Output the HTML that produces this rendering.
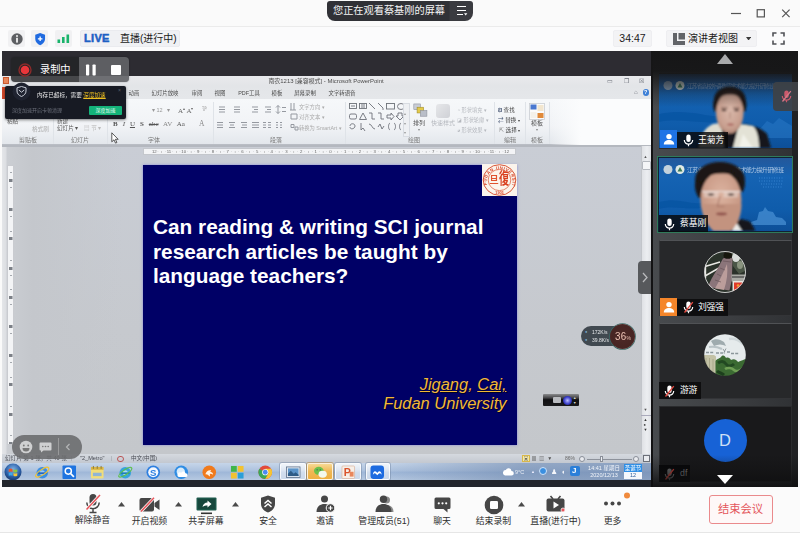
<!DOCTYPE html>
<html lang="zh-CN">
<head>
<meta charset="utf-8">
<title>会议</title>
<style>
*{box-sizing:border-box;margin:0;padding:0}
html,body{width:800px;height:533px;overflow:hidden;background:#fafafa}
body{position:relative;font-family:"Liberation Sans","Noto Sans CJK SC",sans-serif;color:#222}
.abs{position:absolute}
#titlebar{left:0;top:0;width:800px;height:27px;background:#fafafa;border-bottom:1px solid #ebebeb}
#toolbar{left:0;top:27px;width:800px;height:24px;background:#fbfbfc}
#stage{left:2px;top:51px;width:796px;height:436px;background:#2d2c32}
#side{left:651px;top:51px;width:147px;height:436px;background:linear-gradient(90deg,#131314 0,#131314 1.500px,#484b4e 2px,#3e4043 70px,#303235 141px,#202123 141.500px);overflow:hidden}
#sidein{position:absolute;left:1px;top:0;width:146px;height:436px}
#bottom{left:0;top:487px;width:800px;height:46px;background:#fbfbfb;border-bottom:1px solid #e6e6e6}
#ppt{left:2px;top:76px;width:649px;height:411px;background:#c9ccd1;overflow:hidden}
#slide{left:141px;top:88.500px;width:373.500px;height:280.500px;background:#000066}
.pill{left:327px;top:1px;width:146px;height:20px;background:linear-gradient(90deg,#303136 0,#303136 122px,#3a3b40 123px);border-radius:3px 3px 8px 8px;color:#f4f4f4;font-size:10.2px;line-height:19px;padding-left:6px;white-space:nowrap}

.wc{top:0;height:26px;width:26px;color:#444}
.tb-box{top:30px;height:17px;background:#f3f3f5;border:1px solid #eeeef1;border-radius:2px}
.tb-ic{top:30px;width:17px;height:17px;background:#f1f1f3;border-radius:2px}
#live{left:80px;top:30px;width:100px;height:17px;background:#f0f1f4;border:1px solid #eaebef;border-radius:2px;white-space:nowrap;font-size:10px;line-height:15px;color:#1a1a1a}
#live b{font-family:"Liberation Sans",sans-serif;font-weight:bold;color:#1c60c4;font-size:11px;letter-spacing:.3px;position:absolute;left:3px;top:0;-webkit-text-stroke:.5px #1c60c4}
#live span{position:absolute;left:39px;top:0}

#ppt{font-family:"Liberation Sans","Noto Sans CJK SC",sans-serif}
#ppt .t{position:absolute;white-space:nowrap;color:#555;font-size:6px;line-height:8px;transform:translateX(-50%);filter:blur(.35px)}
#ppt .tl{position:absolute;white-space:nowrap;color:#777;font-size:5.6px;line-height:8px;filter:blur(.35px)}
#ppt .sep{position:absolute;top:26px;width:1px;height:42px;background:#dfe3e8}
#ppt .ic{position:absolute;filter:blur(.5px)}
#pt-title{left:0;top:0;width:650px;height:10px;background:linear-gradient(#e9eaed,#e3e5e8)}
#pt-tabs{left:0;top:10px;width:650px;height:13px;background:linear-gradient(#e3e5e8,#e5e7ea)}
#pt-rib{left:0;top:23px;width:650px;height:45.500px;background:linear-gradient(#f6f8fa 0%,#f1f3f6 60%,#e3e7ec 100%);border-bottom:1px solid #b9bdc4}
#pt-work{left:0;top:70px;width:650px;height:308px;background:linear-gradient(90deg,#e4e6e9 0,#dcdee2 4px,#cbced3 5px,#c4c7cc 30px,rgba(196,199,204,0) 120px),linear-gradient(#c9cdd5,#c6c9ce 60%,#c4c7cb)}
#slide{box-shadow:0 0 2.500px rgba(110,110,215,.75)}
#slide .h{position:absolute;left:10px;top:50.800px;color:#fff;font-family:"Liberation Sans",sans-serif;font-weight:bold;font-size:20.800px;line-height:24.5px;white-space:nowrap;letter-spacing:0}
#slide .a{position:absolute;right:10px;top:210.300px;color:#f2b838;font-family:"Liberation Sans",sans-serif;font-style:italic;font-size:16.450px;line-height:19.300px;text-align:right;white-space:nowrap;text-shadow:1px 1px 0 rgba(0,0,0,.6)}
#pt-status{left:0;top:378px;width:650px;height:9px;background:linear-gradient(#d5d9df,#c3c8d0)}
#taskbar{left:0;top:387px;width:650px;height:17px;background:linear-gradient(90deg,rgba(120,145,180,0) 0,rgba(120,145,180,0) 380px,rgba(105,130,168,.55) 520px,rgba(105,130,168,.6) 650px),linear-gradient(#c6d5e9,#adc2de 45%,#9fb7d8 55%,#b6c9e1)}
#blackstrip{left:0;top:404px;width:650px;height:8px;background:#22252b}

#rec{left:11px;top:57px;width:118px;height:25px;border-radius:4px;background:rgba(34,35,38,.82);overflow:hidden;box-shadow:0 0 2px rgba(0,0,0,.3)}
#rec .r{position:absolute;left:68px;top:0;width:50px;height:25px;background:rgba(150,152,156,.5)}
#rec .txt{position:absolute;left:29px;top:0;color:#fff;font-size:10.2px;line-height:25px;white-space:nowrap}
#pop{left:5px;top:86px;width:121px;height:33px;background:#171a23;border-radius:2px;box-shadow:0 1px 3px rgba(0,0,0,.5)}
#pop .a1{position:absolute;left:32px;top:5px;font-size:5.6px;line-height:8px;color:#e8e8e8;white-space:nowrap;filter:blur(.3px)}
#pop .a2{position:absolute;left:7px;top:20px;font-size:5px;line-height:8px;color:#6d717c;white-space:nowrap;filter:blur(.3px)}
#pop .btn{position:absolute;left:84px;top:20px;width:33px;height:9px;background:#14b37a;color:#eafff5;font-size:5px;line-height:9px;text-align:center;border-radius:1px}
#emo{left:12px;top:435px;width:70px;height:24px;border-radius:12px;background:rgba(108,109,111,.9)}
#stat .s{position:absolute;top:0;font-size:5.6px;line-height:9px;color:#4a4d55;white-space:nowrap;filter:blur(.3px)}
.tk{position:absolute;top:1.500px;width:14.500px;height:14.500px;filter:blur(.45px)}
.tkh{position:absolute;top:0;width:26px;height:17px;background:linear-gradient(rgba(255,255,255,.75),rgba(235,242,250,.45));border:1px solid rgba(255,255,255,.8);border-radius:2px;box-shadow:0 0 0 1px rgba(110,130,160,.45)}

#side .fr{position:absolute;left:7px;width:133px;height:76px;background:#27282a;border:1px solid #333437;border-top-color:#505255}
#side .lab{position:absolute;height:17px;background:rgba(8,8,10,.82);color:#fff;font-size:8.800px;line-height:17px;white-space:nowrap;font-weight:400}
#side .lab span{position:absolute;top:0}
#side .ub{position:absolute;width:17px;height:17.500px}

#bottom .l{position:absolute;top:28px;font-size:8.900px;line-height:12px;color:#2e2e2e;white-space:nowrap;transform:translateX(-50%)}
#bottom .c{position:absolute;top:15px;width:7px;height:4.500px}
#bottom svg.i{position:absolute}
#endbtn{position:absolute;left:708.500px;top:7.500px;width:64px;height:29px;border:1px solid #ea8a8c;border-radius:3px;background:#fef8f8;color:#e4565b;font-size:11.300px;line-height:27px;text-align:center}
#ppt .tb{font-size:5.400px;color:#4a4a4a}
#hruler i{position:absolute;top:0;font-style:normal;font-size:4.300px;line-height:5px;color:#666;transform:translateX(-50%);white-space:nowrap}
</style>
</head>
<body>
<div id="titlebar" class="abs"></div>
<div class="abs pill">您正在观看蔡基刚的屏幕</div>
<div id="toolbar" class="abs"></div>

<!-- window controls -->
<svg class="abs" style="left:726px;top:0" width="74" height="26" viewBox="0 0 74 26">
  <line x1="5" y1="13.5" x2="15" y2="13.5" stroke="#555" stroke-width="1.2"/>
  <rect x="31.200" y="9.700" width="7.200" height="7.200" fill="none" stroke="#555" stroke-width="1.200"/>
  <path d="M56.200 9.700 L63.600 17.100 M63.600 9.700 L56.200 17.100" stroke="#555" stroke-width="1.200" fill="none"/>
</svg>
<!-- pill menu icon -->
<svg class="abs" style="left:456px;top:5px" width="12" height="11" viewBox="0 0 12 11">
  <path d="M1 1.5H10 M1 5.5H10 M1 9.5H7" stroke="#fff" stroke-width="1.2"/>
  <path d="M8 8.3h3.4l-1.7 2.2z" fill="#fff"/>
</svg>
<!-- toolbar left icons -->
<div class="abs tb-ic" style="left:8px"></div>
<div class="abs tb-ic" style="left:31px"></div>
<div class="abs tb-ic" style="left:55px"></div>
<svg class="abs" style="left:10px;top:31.500px" width="14" height="14" viewBox="0 0 14 14">
  <circle cx="7" cy="7" r="5.700" fill="#5d5f63"/>
  <circle cx="7" cy="3.9" r="1" fill="#f1f1f1"/>
  <rect x="6.1" y="5.8" width="1.8" height="4.8" fill="#f1f1f1"/>
</svg>
<svg class="abs" style="left:33.600px;top:32px" width="12.300" height="14" viewBox="0 0 14 16">
  <path d="M7 1 L12.6 3 V8 C12.6 11.5 10 13.8 7 15 C4 13.8 1.4 11.5 1.4 8 V3 Z" fill="#1f6ae0"/>
  <path d="M7 5.2 V10.4 M4.4 7.8 H9.6" stroke="#fff" stroke-width="1.5"/>
</svg>
<svg class="abs" style="left:57px;top:32px" width="14" height="13" viewBox="0 0 14 13">
  <rect x="0.5" y="7.500" width="2.600" height="3.500" fill="#19b36b"/>
  <rect x="5" y="5" width="2.600" height="6" fill="#19b36b"/>
  <rect x="9.500" y="2.500" width="2.600" height="8.500" fill="#19b36b"/>
</svg>
<div id="live" class="abs"><b>LIVE</b><span>直播(进行中)</span></div>
<!-- toolbar right -->
<div class="abs tb-box" style="left:613px;width:39px;font-size:10.5px;line-height:15px;text-align:center;color:#1a1a1a">34:47</div>
<div class="abs tb-box" style="left:666px;width:91px;font-size:10px;line-height:15px;color:#1a1a1a;white-space:nowrap">
  <svg class="abs" style="left:6px;top:2px" width="12" height="12" viewBox="0 0 12 12"><path d="M0 0H4V8H12V12H0Z" fill="#626468"/><rect x="5.5" y="0" width="6.5" height="6.5" fill="#626468"/></svg>
  <span class="abs" style="left:21px;top:0">演讲者视图</span>
  <svg class="abs" style="left:79px;top:5.500px" width="5.200" height="3.600" viewBox="0 0 6 4"><path d="M0 0H6L3 4Z" fill="#3a3a3a"/></svg>
</div>
<svg class="abs" style="left:772px;top:32px" width="13" height="13" viewBox="0 0 13 13">
  <path d="M1 4.5V1H4.5 M8.5 1H12V4.5 M12 8.5V12H8.5 M4.5 12H1V8.5" stroke="#505256" stroke-width="1.6" fill="none"/>
</svg>
<div id="stage" class="abs"></div>
<div id="ppt" class="abs">
  <div id="pt-title" class="abs"></div>
  <div id="pt-tabs" class="abs"></div>
  <div id="pt-rib" class="abs"></div>
  <div id="pt-work" class="abs"></div>
  <div class="t" style="left:324px;top:1px;color:#4c4c4c;font-size:5.950px">南农1213 [兼容模式] - Microsoft PowerPoint</div>
  <!-- tabs -->
  <div class="abs" style="left:0;top:11px;width:9px;height:12px;background:#d2492a"></div>
  <div class="t tb" style="left:132px;top:13px">动画</div>
  <div class="t tb" style="left:163px;top:13px">幻灯片放映</div>
  <div class="t tb" style="left:195px;top:13px">审阅</div>
  <div class="t tb" style="left:218px;top:13px">视图</div>
  <div class="t tb" style="left:247px;top:13px">PDF工具</div>
  <div class="t tb" style="left:275px;top:13px">模板</div>
  <div class="t tb" style="left:303px;top:13px">屏幕录制</div>
  <div class="t tb" style="left:340px;top:13px">文字转语音</div>
  <!-- group labels -->
  <div class="t" style="left:26px;top:60px;color:#777">剪贴板</div>
  <div class="t" style="left:78px;top:60px;color:#777">幻灯片</div>
  <div class="t" style="left:152px;top:60px;color:#777">字体</div>
  <div class="t" style="left:274px;top:60px;color:#777">段落</div>
  <div class="t" style="left:412px;top:60px;color:#777">绘图</div>
  <div class="t" style="left:508px;top:60px;color:#777">编辑</div>
  <div class="t" style="left:535px;top:60px;color:#777">模板</div>
  <div class="sep" style="left:51px"></div><div class="sep" style="left:105px"></div><div class="sep" style="left:211px"></div>
  <div class="sep" style="left:343px"></div><div class="sep" style="left:492px"></div><div class="sep" style="left:523px"></div><div class="sep" style="left:547px"></div>
  <!-- clipboard / slides -->
  <div class="tl" style="left:5px;top:41px;color:#666">粘贴</div>
  <div class="tl" style="left:30px;top:49px;color:#aaa">格式刷</div>
  <div class="tl" style="left:55px;top:41px;color:#555">新建</div>
  <div class="tl" style="left:55px;top:48px;color:#555">幻灯片 ▾</div>
  <div class="tl" style="left:82px;top:48px;color:#bbb">▤ 节 ▾</div>
  <!-- font group -->
  <div class="tl" style="left:150px;top:30px;color:#999;font-size:5.5px">▾ 12 &nbsp;&nbsp;▾</div>
  <div class="tl" style="left:176px;top:29px;color:#666;font-family:'Liberation Serif',serif;font-size:7px">A<sup style="font-size:4px">▴</sup> A<sup style="font-size:4px">▾</sup></div>
  <div class="tl" style="left:200px;top:29px;color:#999;font-size:7px">⅌</div>
  <div class="tl" style="left:111px;top:43.5px;color:#555;font-family:'Liberation Serif',serif;font-size:7px;word-spacing:3.2px"><b>B</b> <i>I</i> <u>U</u> <b>S</b> <s>abc</s> <span style="color:#888">AV</span> Aa</div>
  <div class="tl" style="left:197px;top:43.5px;color:#888;font-family:'Liberation Serif',serif;font-size:7.5px">A</div>
  <!-- paragraph group icons -->
  <svg class="ic" style="left:214px;top:26px" width="130" height="32" viewBox="0 0 130 32">
    <g stroke="#9599a0" stroke-width="1" fill="none">
      <path d="M3 5h6M3 7.500h6M3 10h6 M18 5h6M18 7.500h6M18 10h6"/>
      <path d="M36 5h6M38 7.500h4M36 10h6 M49 5h6M51 7.500h4M49 10h6"/>
      <path d="M62 3.500v8M60 5.500l2-2 2 2M60 9.500l2 2 2-2 M66 5.500h4M66 9.500h4"/>
      <path d="M1 20.500h6M1 23h6M1 25.500h6 M13 20.500h6M14 23h4M13 25.500h6 M25 20.500h6M26 23h5M25 25.500h6 M36 20.500h7M36 23h7M36 25.500h7 M47 20.500h3M52 20.500h3M47 23h3M52 23h3M47 25.500h3M52 25.500h3"/>
      <path d="M60 20.500h2M64 20.500h2M60 23h2M64 23h2M60 25.500h2M64 25.500h2"/>
      <path d="M75 1v7M78 1v7M74 8h6 M75 12h6v5h-6z M75 22.500h3v3h-3zM79 25h3v3h-3z"/>
    </g>
  </svg>
  <div class="tl" style="left:297px;top:26.500px;color:#aaa;font-size:5.300px">文字方向 ▾</div>
  <div class="tl" style="left:297px;top:36.500px;color:#aaa;font-size:5.300px">对齐文本 ▾</div>
  <div class="tl" style="left:297px;top:47.500px;color:#aaa;font-size:5.300px">转换为 SmartArt ▾</div>
  <!-- drawing shapes -->
  <svg class="ic" style="left:346px;top:26px" width="56" height="36" viewBox="0 0 56 36">
    <g stroke="#6d7178" stroke-width=".9" fill="none">
      <rect x="1.5" y="1.5" width="7" height="5"/><path d="M3 4h4"/>
      <rect x="11.5" y="1.5" width="7" height="5"/><path d="M13 3h4M13 5h4"/>
      <path d="M21 1l6 6 M30 1l5 5v2"/><rect x="38.5" y="1.5" width="8" height="5.5"/><ellipse cx="53" cy="4.5" rx="3.5" ry="3"/>
      <rect x="1.5" y="12" width="7" height="5" rx="1.5"/><path d="M15 11l3.5 6.5h-7z"/><path d="M21 11h3v6h3 M30 11h3v6h3"/><path d="M39 13h4v-2l3 3.5-3 3.500v-2h-4z"/><path d="M50 11h4v3h2l-4 4-4-4h2z"/>
      <path d="M2 24c0-3 5-3 5 0s-5 4-5 1"/><path d="M13 21v7l2-2 2 3"/><path d="M21 22c3 0 3 5 6 5 M30 25l2-3 2 5 2-3"/><path d="M42 21c-2 1-2 6 0 7 M46 21c2 1 2 6 0 7 M53 21c-2 1-2 6 0 7"/>
    </g>
  </svg>
  <div class="abs" style="left:401px;top:27px;width:7px;height:34px;border:1px solid #d8dce2;background:#eef0f3"></div>
  <div class="tl" style="left:401.500px;top:33px;color:#999;font-size:4px;line-height:9.500px">▴<br>▾<br>▾</div>
  <!-- arrange / quick styles -->
  <svg class="ic" style="left:411px;top:26.500px" width="18" height="15" viewBox="0 0 22 18">
    <rect x="1" y="1" width="8" height="7" fill="#c9cdd6" stroke="#8a8f9a" stroke-width=".7"/><rect x="5" y="5" width="8" height="7" fill="#e2c94b" stroke="#a08c2a" stroke-width=".7"/><rect x="9" y="9" width="8" height="7" fill="#b9bec8" stroke="#8a8f9a" stroke-width=".7"/>
  </svg>
  <div class="t" style="left:417px;top:43px;color:#555">排列</div>
  <div class="t" style="left:417px;top:50px;color:#888;font-size:4px">▾</div>
  <div class="abs" style="left:434px;top:28px;width:14px;height:14px;border-radius:3px;background:linear-gradient(135deg,#e6e7ea,#cfd1d6);filter:blur(.6px)"></div>
  <div class="t" style="left:441px;top:43px;color:#b5b8be">快速样式</div>
  <div class="tl" style="left:455px;top:30px;color:#b5b8be;font-size:5.200px">◔ 形状填充 ▾</div>
  <div class="tl" style="left:455px;top:40px;color:#b5b8be;font-size:5.200px">◪ 形状轮廓 ▾</div>
  <div class="tl" style="left:455px;top:50px;color:#b5b8be;font-size:5.200px">◕ 形状效果 ▾</div>
  <!-- edit group -->
  <div class="tl" style="left:496px;top:30px;color:#444"><b style="color:#3a4a6a">Ꞛ</b> 查找</div>
  <div class="tl" style="left:496px;top:40px;color:#444"><span style="color:#3a4a6a">⇄</span> 替换 <span style="font-size:4px">▾</span></div>
  <div class="tl" style="left:497px;top:50px;color:#444"><span style="color:#777">⇱</span> 选择 <span style="font-size:4px">▾</span></div>
  <svg class="ic" style="left:527px;top:27px" width="16" height="17" viewBox="0 0 16 17">
    <rect x=".5" y=".5" width="15" height="16" fill="#fbfbfb" stroke="#c9ccd2" stroke-width=".8"/>
    <rect x="1.5" y="1.500" width="6" height="5" fill="#4a78d0"/><rect x="8.5" y="2" width="6" height="6" fill="#f2e6cf"/><rect x="1.5" y="9" width="6" height="6" fill="#f4f1ea"/><rect x="8.500" y="10" width="6" height="5" fill="#e08a3a"/>
  </svg>
  <div class="t" style="left:535px;top:43px;color:#555">模板</div>
  <div class="t" style="left:535px;top:50px;color:#888;font-size:4px">▾</div>
  <!-- window controls of ppt -->
  <div class="tl" style="left:605px;top:1px;color:#6a6e78;font-size:6px;word-spacing:9px">▭ ❐ ☒</div>
  <div class="tl" style="left:632px;top:12px;color:#6a6e78;font-size:6px">⌂</div>
  <div class="abs" style="left:640.500px;top:13px;width:6.500px;height:6.500px;border-radius:50%;background:#3d7fd6;filter:blur(.4px);color:#fff;font-size:5.500px;line-height:6.500px;text-align:center;font-weight:bold">?</div>
  <div class="abs" style="left:548px;top:23px;width:102px;height:46px;background:linear-gradient(90deg,rgba(255,255,255,0),#fbfcfd 30%)"></div>

  <!-- rulers -->
  <div id="hruler" class="abs" style="left:141px;top:72px;width:373px;height:7px;background:#f3f4f6;border:1px solid #c4c7cc;overflow:hidden;filter:blur(.3px)"><i style="left:10.3px">12</i><i style="left:14.0px;color:#999">·</i><i style="left:17.6px;color:#888">ı</i><i style="left:21.3px;color:#999">·</i><i style="left:25.0px">11</i><i style="left:28.6px;color:#999">·</i><i style="left:32.3px;color:#888">ı</i><i style="left:36.0px;color:#999">·</i><i style="left:39.7px">10</i><i style="left:43.3px;color:#999">·</i><i style="left:47.0px;color:#888">ı</i><i style="left:50.7px;color:#999">·</i><i style="left:54.3px">9</i><i style="left:58.0px;color:#999">·</i><i style="left:61.7px;color:#888">ı</i><i style="left:65.3px;color:#999">·</i><i style="left:69.0px">8</i><i style="left:72.7px;color:#999">·</i><i style="left:76.4px;color:#888">ı</i><i style="left:80.0px;color:#999">·</i><i style="left:83.7px">7</i><i style="left:87.4px;color:#999">·</i><i style="left:91.0px;color:#888">ı</i><i style="left:94.7px;color:#999">·</i><i style="left:98.4px">6</i><i style="left:102.1px;color:#999">·</i><i style="left:105.7px;color:#888">ı</i><i style="left:109.4px;color:#999">·</i><i style="left:113.1px">5</i><i style="left:116.7px;color:#999">·</i><i style="left:120.4px;color:#888">ı</i><i style="left:124.1px;color:#999">·</i><i style="left:127.8px">4</i><i style="left:131.4px;color:#999">·</i><i style="left:135.1px;color:#888">ı</i><i style="left:138.8px;color:#999">·</i><i style="left:142.4px">3</i><i style="left:146.1px;color:#999">·</i><i style="left:149.8px;color:#888">ı</i><i style="left:153.5px;color:#999">·</i><i style="left:157.1px">2</i><i style="left:160.8px;color:#999">·</i><i style="left:164.5px;color:#888">ı</i><i style="left:168.1px;color:#999">·</i><i style="left:171.8px">1</i><i style="left:175.5px;color:#999">·</i><i style="left:179.2px;color:#888">ı</i><i style="left:182.8px;color:#999">·</i><i style="left:186.5px">0</i><i style="left:190.2px;color:#999">·</i><i style="left:193.8px;color:#888">ı</i><i style="left:197.5px;color:#999">·</i><i style="left:201.2px">1</i><i style="left:204.9px;color:#999">·</i><i style="left:208.5px;color:#888">ı</i><i style="left:212.2px;color:#999">·</i><i style="left:215.9px">2</i><i style="left:219.5px;color:#999">·</i><i style="left:223.2px;color:#888">ı</i><i style="left:226.9px;color:#999">·</i><i style="left:230.6px">3</i><i style="left:234.2px;color:#999">·</i><i style="left:237.9px;color:#888">ı</i><i style="left:241.6px;color:#999">·</i><i style="left:245.2px">4</i><i style="left:248.9px;color:#999">·</i><i style="left:252.6px;color:#888">ı</i><i style="left:256.3px;color:#999">·</i><i style="left:259.9px">5</i><i style="left:263.6px;color:#999">·</i><i style="left:267.3px;color:#888">ı</i><i style="left:270.9px;color:#999">·</i><i style="left:274.6px">6</i><i style="left:278.3px;color:#999">·</i><i style="left:282.0px;color:#888">ı</i><i style="left:285.6px;color:#999">·</i><i style="left:289.3px">7</i><i style="left:293.0px;color:#999">·</i><i style="left:296.6px;color:#888">ı</i><i style="left:300.3px;color:#999">·</i><i style="left:304.0px">8</i><i style="left:307.7px;color:#999">·</i><i style="left:311.3px;color:#888">ı</i><i style="left:315.0px;color:#999">·</i><i style="left:318.7px">9</i><i style="left:322.3px;color:#999">·</i><i style="left:326.0px;color:#888">ı</i><i style="left:329.7px;color:#999">·</i><i style="left:333.4px">10</i><i style="left:337.0px;color:#999">·</i><i style="left:340.7px;color:#888">ı</i><i style="left:344.4px;color:#999">·</i><i style="left:348.0px">11</i><i style="left:351.7px;color:#999">·</i><i style="left:355.4px;color:#888">ı</i><i style="left:359.0px;color:#999">·</i><i style="left:362.7px">12</i></div>
  <div class="abs" style="left:5px;top:89px;width:7px;height:280px;border:1px solid #c9cbd0;filter:blur(.35px);background:repeating-linear-gradient(rgba(0,0,0,0) 0,rgba(0,0,0,0) 6.500px,#a4a8ae 6.500px,#a4a8ae 7.300px,rgba(0,0,0,0) 7.300px,rgba(0,0,0,0) 14.600px) center/2px 100% no-repeat,repeating-linear-gradient(rgba(0,0,0,0) 0,rgba(0,0,0,0) 13px,#7c8087 13px,#7c8087 16px,rgba(0,0,0,0) 16px,rgba(0,0,0,0) 29.200px) center/3.500px 100% no-repeat #f3f4f6"></div>
  <div class="abs" style="left:0;top:69px;width:650px;height:1.500px;background:#b4b8bf"></div>

  <div id="slide" class="abs">
    <div class="h">Can reading &amp; writing SCI journal<br>research articles be taught by<br>language teachers?</div>
    <div class="a"><u>Jigang</u>, <u>Cai,</u><br>Fudan University</div>
  </div>
  <div id="pt-status" class="abs"></div>
  <div id="stat" class="abs" style="left:0;top:378px;width:650px;height:9px">
    <div class="s" style="left:3px">幻灯片 第 1 张，共 40 张</div>
    <div class="s" style="left:69px;color:#9a9da5">|</div>
    <div class="s" style="left:78px">"2_Metro"</div>
    <div class="s" style="left:109px;color:#9a9da5">|</div>
    <div class="abs" style="left:115px;top:1.5px;width:7px;height:6px;border:1px solid #b55;border-radius:3px;filter:blur(.4px)"></div>
    <div class="s" style="left:129px">中文(中国)</div>
    <div class="abs" style="left:520px;top:1px;width:8px;height:7px;background:#f5e9a8;border:1px solid #d9b84a"></div>
    <div class="s" style="left:521.5px;color:#555;font-size:5px;word-spacing:1.5px">▣ ▦ ▥ ▼</div>
    <div class="s" style="left:563px;color:#666;font-size:5px">86%</div>
    <div class="abs" style="left:577px;top:1.5px;width:6px;height:6px;border-radius:50%;background:#e9ebef;border:1px solid #8a8f99"></div>
    <div class="abs" style="left:585px;top:4.500px;width:45px;height:1px;background:#8d929b"></div>
    <div class="abs" style="left:598px;top:1.5px;width:3px;height:6px;background:#eef0f3;border:1px solid #8a8f99"></div>
    <div class="abs" style="left:631px;top:1.5px;width:6px;height:6px;border-radius:50%;background:#e9ebef;border:1px solid #8a8f99"></div>
    <div class="abs" style="left:641px;top:1px;width:7px;height:7px;background:#e9ebef;border:1px solid #6c7079"></div>
  </div>
  <!-- v scrollbar -->
  <div class="abs" style="left:639px;top:70px;width:11px;height:308px;background:linear-gradient(90deg,#dfe1e5,#eceef1 50%,#dcdee2);border-left:1px solid #c2c5ca"></div>
  <div class="abs" style="left:640px;top:85px;width:9px;height:9px;background:#f4f5f7;border:1px solid #b4b8bf;border-radius:1px"></div>
  <div class="tl" style="left:641.500px;top:77px;font-size:4px;color:#555">▲</div>
  <div class="tl" style="left:641.500px;top:330px;font-size:4px;color:#555">▼</div>
  <div class="tl" style="left:641.500px;top:341px;font-size:4px;color:#333;line-height:5px">▲<br>●<br>▼</div>
  <div class="abs" style="left:639px;top:339px;width:11px;height:1px;background:#aab"></div>

  <div id="taskbar" class="abs"></div>

  <div id="tkicons" class="abs" style="left:0;top:387px;width:650px;height:18px">
    <div class="tkh" style="left:278px"></div>
    <div class="tkh" style="left:305px;background:linear-gradient(#f7d992,#f0b754 50%,#eeb040);box-shadow:0 0 0 1px rgba(170,120,40,.5)"></div>
    <div class="tkh" style="left:333px"></div>
    <div class="tkh" style="left:364px;width:24px"></div>
    <!-- start orb -->
    <svg class="tk" style="left:2px;top:-.5px;width:18px;height:18px" viewBox="0 0 19 19"><defs><radialGradient id="orb" cx=".5" cy=".35" r=".7"><stop offset="0" stop-color="#7fb2e6"/><stop offset=".6" stop-color="#2b5fa8"/><stop offset="1" stop-color="#16305e"/></radialGradient></defs><circle cx="9.5" cy="9.5" r="9" fill="url(#orb)"/><path d="M5 6.500c1.500-.8 2.800-.8 4 0v3c-1.200-.8-2.500-.8-4 0z" fill="#e8572c"/><path d="M10 6.500c1.200.8 2.500.8 4 0v3c-1.500.8-2.800.8-4 0z" fill="#8cc63f"/><path d="M5 10.500c1.500-.8 2.800-.8 4 0v3c-1.200-.8-2.500-.8-4 0z" fill="#3fa9e8"/><path d="M10 10.500c1.200.8 2.500.8 4 0v3c-1.500.8-2.800.8-4 0z" fill="#f6c636"/></svg>
    <!-- IE -->
    <svg class="tk" style="left:33px" viewBox="0 0 15 15"><circle cx="7.500" cy="8" r="6" fill="#3d8fe2"/><circle cx="7.500" cy="8" r="2.600" fill="#9cc6f0"/><path d="M3 8.500h9" stroke="#1f66c2" stroke-width="1.800"/><ellipse cx="7.500" cy="7.500" rx="8" ry="2.700" transform="rotate(-35 7.500 7.500)" fill="none" stroke="#f2c230" stroke-width="1.200"/></svg>
    <!-- search -->
    <svg class="tk" style="left:60px" viewBox="0 0 15 15"><rect x=".5" y=".5" width="14" height="14" rx="1" fill="#1f74e0"/><circle cx="6.500" cy="6.300" r="3.200" fill="none" stroke="#fff" stroke-width="1.500"/><path d="M8.800 8.800l3.500 3.500" stroke="#fff" stroke-width="1.800"/></svg>
    <!-- notes -->
    <svg class="tk" style="left:88px" viewBox="0 0 15 15"><rect x="1" y="2" width="13" height="12" rx="1" fill="#f1dd7a"/><rect x="1" y="2" width="13" height="3" fill="#d9b545"/><rect x="3" y="8" width="9" height="3.500" fill="#8fb4d6"/><path d="M3.500 1v3M7.500 1v3M11.500 1v3" stroke="#8a7a3a" stroke-width="1"/></svg>
    <!-- 360 e -->
    <svg class="tk" style="left:116px" viewBox="0 0 15 15"><circle cx="7.500" cy="8" r="6" fill="#36a3dc"/><circle cx="7.500" cy="8" r="2.600" fill="#a9dcf2"/><path d="M3 8.500h9" stroke="#1f7fb8" stroke-width="1.800"/><ellipse cx="7.500" cy="7.500" rx="8" ry="2.500" transform="rotate(-35 7.500 7.500)" fill="none" stroke="#5cbf4a" stroke-width="1.200"/></svg>
    <!-- sogou -->
    <svg class="tk" style="left:144px" viewBox="0 0 15 15"><circle cx="7.500" cy="7.500" r="7" fill="#2d7fe0"/><circle cx="7.500" cy="7.500" r="5.200" fill="#f4f8ff"/><text x="7.500" y="11" font-family="Liberation Sans,sans-serif" font-size="10" font-weight="bold" fill="#2d7fe0" text-anchor="middle">S</text></svg>
    <!-- cloud -->
    <svg class="tk" style="left:172px" viewBox="0 0 15 15"><circle cx="7.500" cy="7.500" r="7" fill="#2f8de4"/><circle cx="7" cy="7" r="4.300" fill="#d9ecfb"/><path d="M5 12.500h7a2 2 0 0 0 0-4 2.500 2.500 0 0 0-4.500-.5A2.300 2.300 0 0 0 5 12.500z" fill="#fff"/></svg>
    <!-- fox -->
    <svg class="tk" style="left:200px" viewBox="0 0 15 15"><circle cx="7.500" cy="7.500" r="7" fill="#f07a1c"/><path d="M3.500 9.500c1-3 3-4.500 6-4l-1 1.500c2 .5 3 1.500 3 3-1-1-2.500-1.200-3.500-.8.500 1 .3 2-.5 2.800-.3-1.500-1.800-2.700-4-2.500z" fill="#fff4e6"/></svg>
    <!-- color squares -->
    <svg class="tk" style="left:228px" viewBox="0 0 15 15"><rect x="1" y="1" width="6" height="6" fill="#3fb54a"/><rect x="8" y="1" width="6" height="6" fill="#f2c230"/><rect x="1" y="8" width="6" height="6" fill="#f2c230"/><rect x="8" y="8" width="6" height="6" fill="#2a9fd8"/></svg>
    <!-- chrome -->
    <svg class="tk" style="left:256px" viewBox="0 0 15 15"><circle cx="7.500" cy="7.500" r="7" fill="#e24a3b"/><path d="M7.500 7.500L1.400 4A7 7 0 0 0 7.500 14.500l3.500-6z" fill="#3aa757"/><path d="M7.500 7.500l3.500 1-3.500 6A7 7 0 0 0 13.600 4H7.500z" fill="#f7c531"/><circle cx="7.500" cy="7.500" r="3.200" fill="#fff"/><circle cx="7.500" cy="7.500" r="2.500" fill="#4a8af4"/></svg>
    <!-- photo -->
    <svg class="tk" style="left:284px" viewBox="0 0 15 15"><rect x=".5" y="2" width="14" height="11" fill="#e8eef5" stroke="#5a6c84" stroke-width=".8"/><rect x="2" y="3.500" width="11" height="8" fill="#5b94c9"/><path d="M2 9l3-3 3 3 2-1.500 3 2.500v1.500H2z" fill="#2f5c86"/></svg>
    <!-- wechat -->
    <svg class="tk" style="left:311px" viewBox="0 0 15 15"><ellipse cx="6" cy="6" rx="5" ry="4.200" fill="#6cc04a"/><ellipse cx="10" cy="9.500" rx="4.300" ry="3.600" fill="#f4f9ee"/><circle cx="4.300" cy="5" r=".7" fill="#356"/><circle cx="7.500" cy="5" r=".7" fill="#356"/></svg>
    <!-- ppt -->
    <svg class="tk" style="left:339px" viewBox="0 0 15 15"><rect x="1" y="1" width="13" height="13" rx="1" fill="#f6efe8" stroke="#d8a88c" stroke-width=".6"/><text x="6.500" y="11.500" font-family="Liberation Sans,sans-serif" font-size="11" font-weight="bold" fill="#d9532c" text-anchor="middle">P</text><rect x="9" y="7" width="4" height="5" fill="#e9875c"/></svg>
    <!-- meeting -->
    <svg class="tk" style="left:368px" viewBox="0 0 15 15"><rect x=".5" y=".5" width="14" height="14" rx="3" fill="#1d6be0"/><path d="M3 10c0-3 2-4.500 3.500-3l1 1.200 1-1.200C10 5.500 12 7 12 10c-1.200-1.500-2.200-1.800-3.300-.6l-1.200 1.200-1.200-1.200C5.200 8.200 4.200 8.500 3 10z" fill="#fff"/></svg>
  </div>

  <div id="tray" class="abs" style="left:0;top:387px;width:650px;height:18px;filter:blur(.35px)">
    <svg class="abs" style="left:500px;top:4px" width="12" height="9" viewBox="0 0 12 9"><path d="M3 8.500h6.500a2.300 2.300 0 0 0 0-4.600A3 3 0 0 0 3.800 3 2.800 2.800 0 0 0 3 8.500z" fill="#fff"/></svg>
    <div class="abs" style="left:513px;top:5px;font-size:5.500px;line-height:8px;color:#e9eef6">9°C</div>
    <div class="abs" style="left:529px;top:6px;font-size:4px;line-height:6px;color:#eef">▲</div>
    <div class="abs" style="left:537px;top:4px;width:8px;height:8px;border-radius:50%;background:#3b8fe0;border:1px solid #cfe2f7"></div>
    <div class="abs" style="left:549px;top:4px;font-size:7px;line-height:9px;color:#f4f6fa">♟</div>
    <div class="abs" style="left:559px;top:4px;font-size:7px;line-height:9px;color:#f4f6fa">◖</div>
    <div class="abs" style="left:568px;top:3px;width:10px;height:10px;border-radius:2px;background:#2b7fd9"></div>
    <div class="abs" style="left:570px;top:3px;font-size:8px;line-height:10px;color:#fff;font-weight:bold">J</div>
    <div class="abs" style="left:583px;top:1.500px;width:38px;font-size:5.500px;line-height:7.500px;color:#f2f5fa;text-align:center;white-space:nowrap">14:41 星期日<br>2020/12/13</div>
    <div class="abs" style="left:622px;top:1px;width:18px;height:8px;background:#2f8fe6;font-size:5.500px;line-height:8px;color:#fff;text-align:center">圣诞节</div>
    <div class="abs" style="left:622px;top:9px;width:18px;height:7px;background:#f5f8fc;font-size:5.500px;line-height:7px;color:#2b5c9a;text-align:center">12</div>
  </div>
  <div id="blackstrip" class="abs"></div>
</div>

<!-- fudan logo -->
<svg class="abs" style="left:482px;top:164px;filter:blur(.45px)" width="35" height="32" viewBox="0 0 35 32">
  <rect width="35" height="32" fill="#fbf4ec"/>
  <ellipse cx="17.500" cy="16" rx="16.300" ry="15.300" fill="none" stroke="#d9583a" stroke-width="1"/>
  <ellipse cx="17.500" cy="16" rx="11.300" ry="10.600" fill="none" stroke="#df6a4c" stroke-width=".8"/>
  <path id="fdarc" d="M5 21A13 12.300 0 1 1 30 21" fill="none"/>
  <text font-family="Liberation Sans,sans-serif" font-size="4.300" font-weight="bold" fill="#d9482b" letter-spacing=".55"><textPath href="#fdarc" startOffset="0">FUDAN UNIVERSITY</textPath></text>
  <text x="17.500" y="30.300" font-family="Liberation Sans,sans-serif" font-size="3.800" font-weight="bold" fill="#d9482b" text-anchor="middle">1905</text>
  <text x="12" y="19.300" font-family="Noto Sans CJK SC,sans-serif" font-size="9.500" font-weight="bold" fill="#e0522e" text-anchor="middle">旦</text>
  <text x="22" y="12.800" font-family="Noto Sans CJK SC,sans-serif" font-size="10" font-weight="bold" fill="#d9401f" text-anchor="middle" transform="scale(1 1.600)">復</text>
</svg>
<svg class="abs" style="left:111px;top:132px" width="8" height="12" viewBox="0 0 8 12"><path d="M.8.800v9l2.200-2 1.500 3.300 1.400-.6-1.500-3.200h2.800z" fill="#fff" stroke="#333" stroke-width=".8"/></svg>
<div class="abs" style="left:3px;top:77px;width:6px;height:7px;background:#e9865a;border:1px solid #c95a30;filter:blur(.3px)"></div>
<!-- recording pill -->
<div id="rec" class="abs">
  <div class="r"></div>
  <svg class="abs" style="left:7px;top:6px" width="14" height="14" viewBox="0 0 14 14"><circle cx="7" cy="7" r="6" fill="none" stroke="#8a2a2a" stroke-width="1.400"/><circle cx="7" cy="7" r="4.300" fill="#e8363a"/></svg>
  <div class="txt">录制中</div>
  <svg class="abs" style="left:74px;top:7px" width="40" height="12" viewBox="0 0 40 12"><rect x="1" y="0.500" width="3.200" height="11" rx=".8" fill="#fff"/><rect x="7.500" y="0.500" width="3.200" height="11" rx=".8" fill="#fff"/><rect x="26" y="1" width="10" height="10" rx="1" fill="#fff"/></svg>
</div>
<!-- 360 popup -->
<div id="pop" class="abs">
  <svg class="abs" style="left:7px;top:-4.500px;filter:blur(.3px)" width="19" height="19" viewBox="0 0 19 19"><circle cx="9.500" cy="9.500" r="9" fill="#1f2330"/><path d="M9.500 4.500l4.500 1.300v3.200c0 2.600-1.800 4.400-4.500 5.500-2.700-1.100-4.500-2.900-4.500-5.500V5.800z" fill="none" stroke="#c9ced8" stroke-width="1"/><path d="M6.800 8l2.700 2.200L12.200 8" fill="none" stroke="#c9ced8" stroke-width="1"/></svg>
  <div class="a1">内存已超标，需要 <span style="color:#f0c020;text-decoration:underline">深度加速</span></div>
  <div class="a2">深度加速开启卡顿清理</div>
  <div class="btn">深度加速</div>
  <div class="abs" style="left:113px;top:1px;font-size:5px;line-height:6px;color:#5a5f6b">×</div>
</div>
<!-- emoji pill -->
<div id="emo" class="abs">
  <svg class="abs" style="left:7px;top:4.800px;overflow:visible" width="58" height="14" viewBox="0 0 58 14">
    <circle cx="7" cy="7" r="6.300" fill="#cfd0d1"/><circle cx="4.800" cy="5.500" r=".9" fill="#777"/><circle cx="9.200" cy="5.500" r=".9" fill="#777"/><path d="M3.500 8a3.500 3.500 0 0 0 7 0z" fill="#777"/>
    <path d="M21.500 2.500h10a1 1 0 0 1 1 1v6a1 1 0 0 1-1 1h-7l-2.500 2v-2h-.5a1 1 0 0 1-1-1v-6a1 1 0 0 1 1-1z" fill="#cfd0d1"/><circle cx="23.800" cy="6.500" r=".8" fill="#777"/><circle cx="26.500" cy="6.500" r=".8" fill="#777"/><circle cx="29.200" cy="6.500" r=".8" fill="#777"/>
    <path d="M39.500 -2v17" stroke="#a2a3a5" stroke-width=".8"/>
    <path d="M50.500 4l-3 3 3 3" stroke="#b4b5b7" stroke-width="1.200" fill="none"/>
  </svg>
</div>
<!-- floating perf widget -->
<div class="abs" style="left:581px;top:325.500px;width:48px;height:20.500px;border-radius:10.500px;background:#414950;filter:blur(.3px)"></div>
<div class="abs" style="left:610px;top:323.500px;width:25px;height:25px;border-radius:50%;background:radial-gradient(circle at 50% 50%,#4e2a28 0,#472523 60%,#5c302c 100%);box-shadow:0 0 0 .8px #3a6a66"></div>
<div class="abs" style="left:592px;top:327.500px;font-size:5px;line-height:8px;color:#e6e8ea;white-space:nowrap;filter:blur(.3px)">172K/s<br>39.8K/s</div>
<div class="abs" style="left:585px;top:327.500px;font-size:4px;line-height:8px;color:#7fb6d8;white-space:nowrap">●<br>●</div>
<div class="abs" style="left:615px;top:329px;font-size:11.500px;line-height:14px;color:#eec4b6;white-space:nowrap;font-family:'Liberation Sans',sans-serif;letter-spacing:.3px;transform:scaleX(.85);transform-origin:0 0">36<span style="font-size:6px">%</span></div>
<!-- small black widget -->
<div class="abs" style="left:543px;top:394px;width:36px;height:12px;background:linear-gradient(#8a8b8d,#4a4a4c 30%,#101012 48%,#1a1a1c);border-radius:1px;filter:blur(.3px)"></div>
<div class="abs" style="left:553px;top:397px;width:8px;height:6px;background:#b9bbbf;border-radius:1px;filter:blur(.3px)"></div>
<div class="abs" style="left:562.500px;top:395.500px;width:9px;height:9px;border-radius:50%;background:radial-gradient(#b9bcff,#3a3fc8 55%,#1d1f7a);filter:blur(.3px)"></div>
<div class="abs" style="left:573px;top:396px;font-size:3.500px;line-height:4.500px;color:#ddd">▲<br>▼</div>
<!-- collapse handle -->
<div class="abs" style="left:638px;top:261px;width:14px;height:33px;border-radius:4px 0 0 4px;background:#57595c"></div>
<svg class="abs" style="left:641px;top:271px" width="8" height="13" viewBox="0 0 8 13"><path d="M2 2l4 4.500-4 4.500" stroke="#b9babc" stroke-width="1.300" fill="none"/></svg>
<div id="side" class="abs"><div id="sidein">
  <!-- 1 -->
  <div class="fr" style="top:22px;border-color:#2b2c2e"></div>
  <svg class="abs" style="left:7px;top:23px" width="133" height="74" viewBox="0 0 133 74">
    <defs><linearGradient id="bg1" x1="0" y1="0" x2="0" y2="1"><stop offset="0" stop-color="#24589a"/><stop offset=".25" stop-color="#1563b3"/><stop offset=".7" stop-color="#0f5cab"/><stop offset="1" stop-color="#0d4f98"/></linearGradient><filter id="b1"><feGaussianBlur stdDeviation=".9"/></filter><filter id="b2"><feGaussianBlur stdDeviation=".5"/></filter><filter id="b3"><feGaussianBlur stdDeviation="1.600"/></filter>
    <radialGradient id="sk1" cx=".5" cy=".45" r=".6"><stop offset="0" stop-color="#d9b8aa"/><stop offset=".7" stop-color="#c9a090"/><stop offset="1" stop-color="#a98070"/></radialGradient>
    <radialGradient id="sk2" cx=".5" cy=".4" r=".65"><stop offset="0" stop-color="#dcb3a0"/><stop offset=".7" stop-color="#c99a86"/><stop offset="1" stop-color="#a87a68"/></radialGradient></defs>
    <rect width="133" height="74" fill="url(#bg1)"/>
    <g filter="url(#b2)"><circle cx="9" cy="11.500" r="4.500" fill="#8fa9c4"/><circle cx="21" cy="11.500" r="4.500" fill="#cfdcd8"/><path d="M18.500 13.500l2.500-4.500 2.500 4.500z" fill="#3a7a5a"/>
    <text x="28" y="14" font-family="Liberation Sans,Noto Sans CJK SC,sans-serif" font-size="5.600" fill="#9dbbe0" opacity=".8" textLength="88">江苏省高校外语教师学术能力提升研修班</text>
    <path d="M100 56l8-9 6 3 6-6 13 8v12h-33z" fill="#2a78c4" opacity=".55"/><path d="M0 40c30-6 50 4 60 2v6C40 50 20 44 0 48z" fill="#0a4e9c" opacity=".5"/></g>
    <g filter="url(#b1)">
      <path d="M38 74c2-12 8-19 18-22l30-2c8 1 16 4 22 10l4 14z" fill="#17181c"/>
      <path d="M40 74c1-12 5-20 14-24l8-1 3 25z" fill="#dddcd0"/>
      <path d="M80 50l14 2c4 4 6 12 6 22H74z" fill="#e3e2d6"/>
      <path d="M84 60l10 14h-14z" fill="#f2f2ea"/>
      <ellipse cx="70.800" cy="25.500" rx="15.800" ry="13" fill="#1d1613"/>
      <path d="M55 25c-1.500 5-1 9 .5 12.500l3 1V28z M86.600 25c1.500 5 1 9-.5 12.500l-3 1V28z" fill="#1d1613"/>
      <ellipse cx="70.800" cy="39" rx="13.800" ry="20.500" fill="url(#sk1)"/>
      <path d="M57 29c2-9 8-12.500 14-12.500s11.500 3.500 13.500 12.500c-3-6-7-8.500-13.500-8.500S60 23 57 29z" fill="#2a1f1a"/>
      <path d="M62 33.800h6.500M74 33.800h6.500" stroke="#5a4038" stroke-width=".9"/>
      <ellipse cx="65" cy="36.300" rx="2.600" ry="1" fill="#3f2c27"/><ellipse cx="77.500" cy="36.300" rx="2.600" ry="1" fill="#3f2c27"/>
      <path d="M71 38v6.500" stroke="#b88f80" stroke-width="1.200"/>
      <ellipse cx="71.500" cy="50.500" rx="3.300" ry="1.100" fill="#a8625c"/>
      <path d="M60 52c3 5 8 7 11 7s8-2 10.500-7l2 6-12 12-12-12z" fill="#1a1a1e" opacity=".0"/>
    </g>
  </svg>
  <div class="ub" style="left:8px;top:79px;background:#1e73e6"><svg class="abs" style="left:2.500px;top:3px" width="12" height="12" viewBox="0 0 12 12"><circle cx="6" cy="3.600" r="2.700" fill="#fff"/><path d="M.8 11.500c0-3 2.200-4.600 5.200-4.600s5.200 1.600 5.200 4.600z" fill="#fff"/></svg></div>
  <div class="lab" style="left:25px;top:80.500px;width:51px;height:16px;line-height:16px"><svg class="abs" style="left:6px;top:2.500px" width="11" height="13" viewBox="0 0 11 13"><rect x="3.300" y=".5" width="4.400" height="7.500" rx="2.200" fill="#fff"/><path d="M1.300 6a4.200 4.200 0 0 0 8.400 0M5.500 10.200v2" stroke="#fff" stroke-width="1.200" fill="none"/></svg><span style="left:21px">王菊芳</span></div>
  <!-- 2 -->
  <div class="abs" style="left:4.500px;top:104.500px;width:136.500px;height:77px;border:1.300px solid #2f7a5a;background:#123"></div>
  <svg class="abs" style="left:7px;top:107px" width="133" height="73" viewBox="0 0 133 73">
    <rect width="133" height="73" fill="url(#bg1)"/>
    <g filter="url(#b2)"><circle cx="9" cy="11.500" r="4.500" fill="#c3d2dc"/><circle cx="21" cy="11.500" r="4.500" fill="#dfe9e4"/><path d="M18.500 13.500l2.500-4.500 2.500 4.500z" fill="#3a7a5a"/>
    <text x="28" y="14" font-family="Liberation Sans,Noto Sans CJK SC,sans-serif" font-size="5.800" fill="#bfd4ec" opacity=".9" textLength="97">江苏省高校外语教师学术能力提升研修班</text>
    <path d="M92 64l6-2 2-8 4-1 2-4 3 4 5 1 3 5 6 1 4 4v3H92z" fill="#4a92d6" opacity=".7"/>
    <path d="M100 20h24M100 23h24M102 26h22M104 29h20" stroke="#3f8ad8" stroke-width="1" stroke-dasharray="1 1.500" opacity=".8"/>
    <path d="M0 44c20-5 30 3 42 1v5C28 52 14 47 0 51z" fill="#0a4e9c" opacity=".5"/></g>
    <g filter="url(#b1)">
      <path d="M70 73c3-6 7-10 12-12l8 2c3 3 5 6 6 10z" fill="#17181c"/>
      <path d="M77 64l6 9h-10z" fill="#ecebe8"/>
      <ellipse cx="61" cy="21" rx="24.800" ry="17" fill="#1c1512"/>
      <path d="M36.500 22c-1.500 7 0 13 3.500 18h4V26z M85.500 22c1 5 0 9-2 12h-4V26z" fill="#1c1512"/>
      <ellipse cx="62" cy="42" rx="20.500" ry="28.500" fill="url(#sk2)"/><path d="M42.500 46c0 12 6 22 12 27h17c6-5 11-14 11-27z" fill="#c3937f"/>
      <path d="M41.500 28c1-12 10-17 20-17s19 4 21 15c-4-8-10-10.500-20.500-10.500S46 19 41.500 28z" fill="#1c1512"/>
      <path d="M44 33h15.500v6.500H45z M64.500 33H80l-1 6.500H64.500z" fill="#efe6e2" opacity=".45"/>
      <path d="M43 33.500h38.500" stroke="#eee9e6" stroke-width="1.100" opacity=".85"/>
      <ellipse cx="52" cy="36.500" rx="3.200" ry="1.100" fill="#3a2a26"/><ellipse cx="72" cy="36.500" rx="3.200" ry="1.100" fill="#3a2a26"/>
      <path d="M61 38c-1 5-2.500 8-2.500 10.500h7" stroke="#a97868" stroke-width="1.100" fill="none"/>
      <ellipse cx="62.500" cy="56" rx="5.500" ry="1.400" fill="#8e4f4a"/>
    </g>
  </svg>
  <div class="lab" style="left:7px;top:164px;width:49px"><svg class="abs" style="left:5px;top:2.500px" width="11" height="13" viewBox="0 0 11 13"><rect x="3.300" y=".5" width="4.400" height="7.500" rx="2.200" fill="#fff"/><path d="M1.300 6a4.200 4.200 0 0 0 8.400 0M5.500 10.200v2" stroke="#fff" stroke-width="1.200" fill="none"/></svg><span style="left:21px">蔡基刚</span></div>
  <!-- 3 -->
  <div class="fr" style="top:189px"></div>
  <svg class="abs" style="left:50.700px;top:199.400px" width="44" height="44" viewBox="0 0 44 44">
    <defs><clipPath id="c3"><circle cx="22" cy="22" r="20.800"/></clipPath></defs>
    <g clip-path="url(#c3)"><g filter="url(#b2)">
      <rect width="44" height="44" fill="#2b3029"/>
      <path d="M28 0h16v20l-8 4-6-8z" fill="#4c5646"/>
      <ellipse cx="33" cy="7.500" rx="4" ry="4.500" fill="#d9dcda"/>
      <ellipse cx="37" cy="15" rx="3" ry="4" fill="#8a947f"/>
      <path d="M2.500 14v14" stroke="#e9e9e4" stroke-width="1.400"/>
      <path d="M2 16.500l15-4.500M2 26l14-8" stroke="#e9e9e4" stroke-width="1.500" fill="none"/>
      <path d="M20 8.500c3-1.500 7-1.500 9.500 0l-.5 17c0 5-1.200 10-2.600 15L5 37c2-6 5-11 8.500-16.500z" fill="#8b757a"/>
      <path d="M24 14c1 8 0 17-3 26l-9-1.500c4-7 8-15 12-24.500z" fill="#c7a7a4" opacity=".8"/>
      <path d="M14 24l4 2M17 18l5 2M12 30l6 2M20 11l8 1" stroke="#5f4c52" stroke-width=".8" opacity=".7"/>
      <ellipse cx="24.800" cy="5.400" rx="4.200" ry="3.400" fill="#17120f"/>
      <path d="M28.500 24.500h15v7h-15z" fill="#a9aaa4"/><path d="M29 27h14" stroke="#2a2a2a" stroke-width="1"/>
      <path d="M29.500 31h13v11h-13z" fill="#e6e4de"/>
      <path d="M31 32.500h10.500v5l-6 4.500-4.500-1z" fill="#e03a2c"/>
      <circle cx="35" cy="35.500" r="1.300" fill="#f0a030"/>
    </g></g>
    <circle cx="22" cy="22" r="20.500" fill="none" stroke="#dcdcdc" stroke-width=".9"/>
  </svg>
  <div class="ub" style="left:8px;top:247px;background:#f5862a"><svg class="abs" style="left:2.500px;top:3px" width="12" height="12" viewBox="0 0 12 12"><circle cx="6" cy="3.600" r="2.700" fill="#fff"/><path d="M.8 11.500c0-3 2.200-4.600 5.200-4.600s5.200 1.600 5.200 4.600z" fill="#fff"/></svg></div>
  <div class="lab" style="left:25px;top:247.500px;width:51px"><svg class="abs" style="left:6px;top:2.500px" width="11" height="13" viewBox="0 0 11 13"><rect x="3.300" y=".5" width="4.400" height="7.500" rx="2.200" fill="#fff"/><path d="M1.300 6a4.200 4.200 0 0 0 8.400 0M5.500 10.200v2" stroke="#fff" stroke-width="1.200" fill="none"/><path d="M1.500 11.500L9.800 1.200" stroke="#e5483f" stroke-width="1.300"/></svg><span style="left:21px;letter-spacing:-.3px">刘强强</span></div>
  <!-- 4 -->
  <div class="fr" style="top:272px"></div>
  <svg class="abs" style="left:50.700px;top:282.400px" width="44" height="44" viewBox="0 0 44 44">
    <defs><clipPath id="c4"><circle cx="22" cy="22" r="20.800"/></clipPath></defs>
    <g clip-path="url(#c4)"><g filter="url(#b2)">
      <rect width="44" height="44" fill="#e6ebec"/>
      <path d="M8 8c4-3 9-2 13 1l2 4c-4-2-8-2-12 0z" fill="#9fabae"/>
      <path d="M6 14c5-1 9 0 13 2" stroke="#b9c3c6" stroke-width="2" fill="none"/>
      <path d="M26 6c5-1 10 1 14 5" stroke="#cfd7d9" stroke-width="2.500" fill="none"/>
      <path d="M3 19.500h8M13 20h9M24 19h3M28 20.500h8" stroke="#8b969a" stroke-width="1.400" stroke-dasharray="3 1.200"/>
      <path d="M20 16l2 3M23 15.500l-2 4" stroke="#7d888c" stroke-width=".8"/>
      <path d="M0 22h11l2 1.500V44H0z" fill="#c3c2a6"/>
      <path d="M3 25v16M6.500 25v16M10 26v15" stroke="#a9a88a" stroke-width="1"/>
      <path d="M12.500 44V28c2-3 4-2 5.500-4 2-3 4-1 5 1 2-1 4 0 5 2 3-2 6 0 7 2 3-1 6-3 9-3v18z" fill="#3a6a33"/>
      <path d="M15 30c3-2 6-2 8 1s6 2 8 0" stroke="#244a22" stroke-width="3" fill="none"/>
      <path d="M22 36c3-2 7-1 9 1s6 1 9-2" stroke="#6fa055" stroke-width="2.500" fill="none"/>
      <path d="M14 38c2 2 5 2 7 4" stroke="#1f3f1d" stroke-width="3" fill="none"/>
    </g></g>
  </svg>
  <div class="lab" style="left:7px;top:331px;width:42px"><svg class="abs" style="left:5px;top:2.500px" width="11" height="13" viewBox="0 0 11 13"><rect x="3.300" y=".5" width="4.400" height="7.500" rx="2.200" fill="#fff"/><path d="M1.300 6a4.200 4.200 0 0 0 8.400 0M5.500 10.200v2" stroke="#fff" stroke-width="1.200" fill="none"/><path d="M1.500 11.500L9.800 1.200" stroke="#e5483f" stroke-width="1.300"/></svg><span style="left:21px;letter-spacing:-.3px">游游</span></div>
  <!-- 5 -->
  <div class="fr" style="top:355px;background:#19191b;border-color:#2a2b2d"></div>
  <div class="abs" style="left:51.500px;top:367.500px;width:43px;height:43px;border-radius:50%;background:#1762d6"></div>
  <div class="abs" style="left:51.500px;top:367.500px;width:43px;height:43px;text-align:center;font-family:'Liberation Sans',sans-serif;font-size:16.500px;line-height:43px;color:#cfe0f6">D</div>
  <div class="lab" style="left:7px;top:414px;width:31px;background:rgba(5,5,6,.85);color:#8e8f91;font-weight:400"><svg class="abs" style="left:5px;top:2.500px" width="11" height="13" viewBox="0 0 11 13"><rect x="3.300" y=".5" width="4.400" height="7.500" rx="2.200" fill="#77787a"/><path d="M1.300 6a4.200 4.200 0 0 0 8.400 0M5.500 10.200v2" stroke="#77787a" stroke-width="1.200" fill="none"/><path d="M1.500 11.500L9.800 1.200" stroke="#e5483f" stroke-width="1.300"/></svg><span style="left:21px">df</span></div>
  <div class="abs" style="left:-1px;top:0;width:148px;height:56px;background:linear-gradient(rgba(22,22,23,1) 0,rgba(22,22,23,.97) 20px,rgba(22,22,23,.6) 32px,rgba(22,22,23,.25) 44px,rgba(22,22,23,0) 56px)"></div>
  <div class="abs" style="left:-1px;top:404px;width:148px;height:32px;background:linear-gradient(rgba(14,14,15,0),rgba(14,14,15,.35) 14px,rgba(14,14,15,.9) 32px)"></div>
  <svg class="abs" style="left:65px;top:3px" width="16" height="10" viewBox="0 0 16 10"><path d="M8 0l8 10H0z" fill="#a9aaac"/></svg>

  <svg class="abs" style="left:64.500px;top:423.500px" width="16" height="9" viewBox="0 0 16 9"><path d="M0 0h16l-8 9z" fill="#fff"/></svg>
  <!-- floating muted mic -->
  <div class="abs" style="left:121px;top:31px;width:25px;height:28.500px;border-radius:4px 0 0 4px;background:rgba(62,66,70,.93)"></div>
  <svg class="abs" style="left:129px;top:38.500px;filter:blur(.3px)" width="11" height="13" viewBox="0 0 11 13"><rect x="3.300" y=".5" width="4.400" height="7.500" rx="2.200" fill="#c95a6c"/><path d="M1.300 6a4.200 4.200 0 0 0 8.400 0M5.500 10.200v2" stroke="#c95a6c" stroke-width="1.200" fill="none"/><path d="M1.500 11.500L9.800 1.200" stroke="#d97888" stroke-width="1.200"/></svg>
</div></div>
<div id="bottom" class="abs">
  <!-- mic muted -->
  <svg class="i" style="left:83px;top:6px" width="20" height="21" viewBox="0 0 20 21"><rect x="6.500" y="1" width="7" height="11.500" rx="3.500" fill="#464646"/><path d="M3.800 9.500a6.200 6.200 0 0 0 12.400 0M10 15.700v3.300M6.500 19.500h7" stroke="#464646" stroke-width="1.500" fill="none"/><path d="M3.500 16.500L17 2" stroke="#fbfbfb" stroke-width="3.200"/><path d="M3.500 16.500L17 2" stroke="#e8545a" stroke-width="1.500"/></svg>
  <div class="l" style="left:92.500px;top:27px">解除静音</div>
  <svg class="c" style="left:117.5px" viewBox="0 0 7 4.500"><path d="M3.500 0L7 4.500H0z" fill="#4a4a4a"/></svg>
  <!-- camera off -->
  <svg class="i" style="left:139px;top:10px" width="22" height="16" viewBox="0 0 22 16"><rect x=".5" y="1" width="14.500" height="13.500" rx="2" fill="#464646"/><path d="M15.500 6l5-3.500v10.500l-5-3.500z" fill="#464646"/><path d="M2 14.500L15 .8" stroke="#fbfbfb" stroke-width="3"/><path d="M2 14.500L15 .8" stroke="#e8545a" stroke-width="1.500"/></svg>
  <div class="l" style="left:149.500px">开启视频</div>
  <svg class="c" style="left:174.5px" viewBox="0 0 7 4.500"><path d="M3.500 0L7 4.500H0z" fill="#4a4a4a"/></svg>
  <!-- share screen -->
  <svg class="i" style="left:196px;top:10px" width="21" height="18" viewBox="0 0 21 18"><rect x=".5" y=".5" width="20" height="13" rx="1" fill="#1f5a4c"/><rect x="1.800" y="1.800" width="17.400" height="10.400" fill="#17473c"/><path d="M6.500 10c.5-3 2.500-4.500 5-4.500V3.500l4 3.500-4 3.500V8.500c-2 0-3.500.3-5 1.500z" fill="#fff"/><rect x="5" y="15.500" width="11" height="1.600" fill="#333"/></svg>
  <div class="l" style="left:206px">共享屏幕</div>
  <svg class="c" style="left:231.5px" viewBox="0 0 7 4.500"><path d="M3.500 0L7 4.500H0z" fill="#4a4a4a"/></svg>
  <!-- security -->
  <svg class="i" style="left:259.500px;top:8px" width="16" height="18" viewBox="0 0 16 18"><path d="M8 .5l7 2.300v6.200c0 4-3 7-7 8.500-4-1.500-7-4.500-7-8.500V2.800z" fill="#464646"/><path d="M4.500 8.500L8 5.500l3.500 3M4.500 12L8 9l3.500 3" stroke="#fff" stroke-width="1.500" fill="none"/></svg>
  <div class="l" style="left:268px">安全</div>
  <!-- invite -->
  <svg class="i" style="left:315.500px;top:8px" width="20" height="18" viewBox="0 0 20 18"><circle cx="8.500" cy="4" r="3.500" fill="#464646"/><path d="M.5 17c0-5 3-8 8-8 2 0 3.500.5 4.800 1.500L12 17z" fill="#464646"/><circle cx="14.500" cy="13" r="4.300" fill="#464646" stroke="#fbfbfb" stroke-width="1"/><path d="M14.500 10.800v4.400M12.300 13h4.400" stroke="#fff" stroke-width="1.200"/></svg>
  <div class="l" style="left:325px">邀请</div>
  <!-- members -->
  <svg class="i" style="left:374.500px;top:8px" width="19" height="18" viewBox="0 0 19 18"><circle cx="11.500" cy="5" r="3.500" fill="#8a8a8a"/><path d="M5 17c0-4.500 2.500-7 6.500-7s7 2.500 7 7z" fill="#8a8a8a"/><circle cx="8.500" cy="4.200" r="3.700" fill="#464646"/><path d="M.5 17c0-5 3-8 8-8s8 3 8 8z" fill="#464646"/></svg>
  <div class="l" style="left:384px">管理成员(51)</div>
  <!-- chat -->
  <svg class="i" style="left:434px;top:10px" width="17" height="16" viewBox="0 0 17 16"><path d="M2 .5h13a1.500 1.500 0 0 1 1.500 1.500v8.500a1.500 1.500 0 0 1-1.500 1.500h-1.500v3.500l-4-3.500H2a1.500 1.500 0 0 1-1.500-1.500V2A1.500 1.500 0 0 1 2 .5z" fill="#464646"/><circle cx="4.800" cy="6.300" r="1.100" fill="#fff"/><circle cx="8.500" cy="6.300" r="1.100" fill="#fff"/><circle cx="12.200" cy="6.300" r="1.100" fill="#fff"/></svg>
  <div class="l" style="left:442px">聊天</div>
  <!-- stop rec -->
  <svg class="i" style="left:484px;top:8px" width="20" height="20" viewBox="0 0 20 20"><circle cx="10" cy="10" r="9.300" fill="#464646"/><rect x="6" y="6" width="8" height="8" rx="1.300" fill="#fff"/></svg>
  <div class="l" style="left:493.500px">结束录制</div>
  <svg class="c" style="left:517.5px" viewBox="0 0 7 4.500"><path d="M3.500 0L7 4.500H0z" fill="#4a4a4a"/></svg>
  <!-- live -->
  <svg class="i" style="left:546px;top:8px" width="20" height="18" viewBox="0 0 20 18"><path d="M4.500 1l2.500 3M14.500 1l-2.500 3" stroke="#464646" stroke-width="1.600"/><rect x=".5" y="3.500" width="18" height="13" rx="2" fill="#464646"/><path d="M7.500 6.500l5.500 3.500-5.500 3.500z" fill="#fff"/><circle cx="17" cy="15" r="2" fill="#e8545a" stroke="#fbfbfb" stroke-width=".8"/></svg>
  <div class="l" style="left:555.500px">直播(进行中)</div>
  <!-- more -->
  <svg class="i" style="left:603px;top:5px" width="28" height="16" viewBox="0 0 28 16"><circle cx="3" cy="11.500" r="2" fill="#464646"/><circle cx="9.500" cy="11.500" r="2" fill="#464646"/><circle cx="16" cy="11.500" r="2" fill="#464646"/><circle cx="24" cy="3.500" r="3" fill="#f08a3c"/></svg>
  <div class="l" style="left:612.500px">更多</div>
  <div id="endbtn">结束会议</div>
</div>

</body>
</html>
